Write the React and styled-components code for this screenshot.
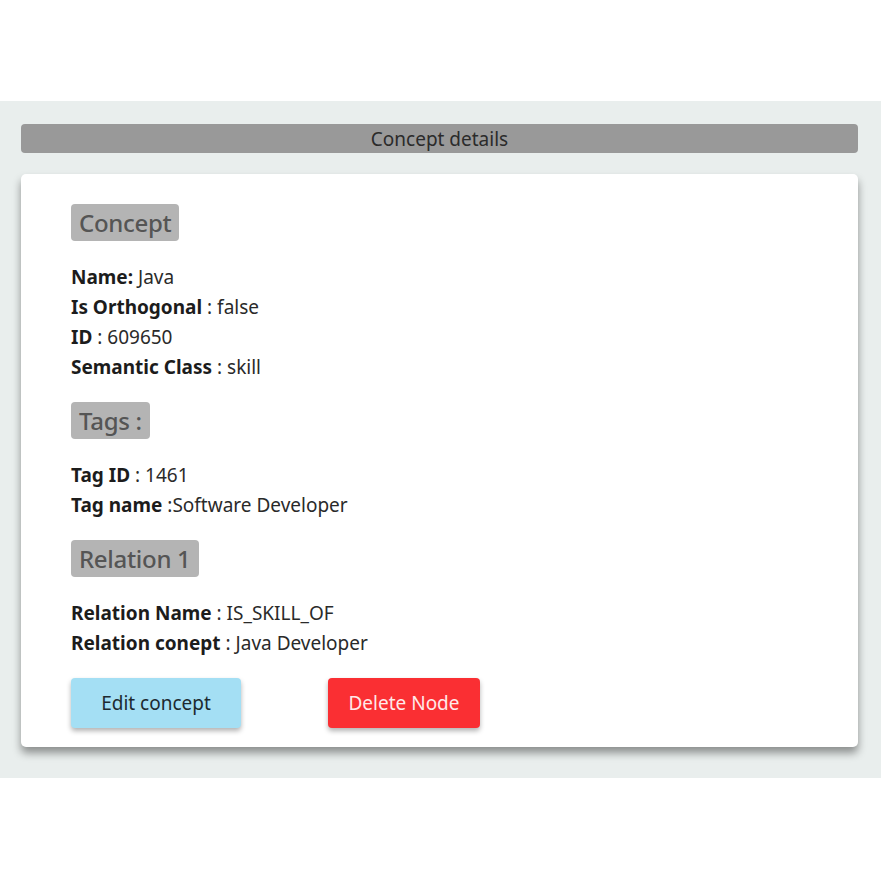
import React from "react";
import styled, { createGlobalStyle } from "styled-components";

const GlobalStyle = createGlobalStyle`
  body {
    margin: 0;
    background: #fff;
    font-family: "Noto Sans", "Open Sans", sans-serif;
    color: #212529;
  }
`;

const Page = styled.div`
  padding-top: 101px;
`;

const Band = styled.section`
  background-color: #e9eeed;
  padding: 23px 23px 31px 21px;
`;

const TitleBar = styled.div`
  background-color: #999999;
  border-radius: 4px;
  height: 29px;
  display: flex;
  align-items: center;
  justify-content: center;
  font-size: 19px;
  color: #2b2b2b;
  margin-bottom: 21px;
`;

const Card = styled.div`
  background-color: #fff;
  border-radius: 5px;
  padding: 30px 50px 19px;
  box-shadow: 0 6px 9px rgba(0, 0, 0, 0.4);
`;

const Badge = styled.h3`
  display: inline-block;
  margin: ${(p) => (p.first ? "0" : "20px")} 0 21px;
  padding: 0 8px;
  height: 37px;
  line-height: 37px;
  background-color: #b4b4b4;
  color: #555;
  border-radius: 4px;
  font-size: 24px;
  font-weight: 500;
  letter-spacing: -0.3px;
`;

const Line = styled.p`
  margin: 0;
  font-size: 19px;
  line-height: 30px;
  color: #2a2a2a;

  b {
    color: #1c1c1c;
  }
`;

const Actions = styled.div`
  display: flex;
  gap: 87px;
  margin-top: 20px;
`;

const Button = styled.button`
  height: 50px;
  width: ${(p) => p.w}px;
  border: none;
  border-radius: 4px;
  font-family: inherit;
  font-size: 19px;
  background-color: ${(p) => (p.danger ? "#fa2f33" : "#a4dff4")};
  color: ${(p) => (p.danger ? "#ffe9e9" : "#1d2a30")};
  box-shadow: 0 3px 5px rgba(0, 0, 0, 0.3);
  cursor: pointer;
`;

export default function App() {
  return (
    <>
      <GlobalStyle />
      <Page>
        <Band>
          <TitleBar>Concept details</TitleBar>
          <Card>
            <Badge first>Concept</Badge>
            <Line><b>Name:</b> Java</Line>
            <Line><b>Is Orthogonal</b> : false</Line>
            <Line><b>ID</b> : 609650</Line>
            <Line><b>Semantic Class</b> : skill</Line>
            <div>
              <Badge>Tags :</Badge>
            </div>
            <Line><b>Tag ID</b> : 1461</Line>
            <Line><b>Tag name</b> :Software Developer</Line>
            <div>
              <Badge>Relation 1</Badge>
            </div>
            <Line><b>Relation Name</b> : IS_SKILL_OF</Line>
            <Line><b>Relation conept</b> : Java Developer</Line>
            <Actions>
              <Button w={170}>Edit concept</Button>
              <Button w={152} danger>Delete Node</Button>
            </Actions>
          </Card>
        </Band>
      </Page>
    </>
  );
}
